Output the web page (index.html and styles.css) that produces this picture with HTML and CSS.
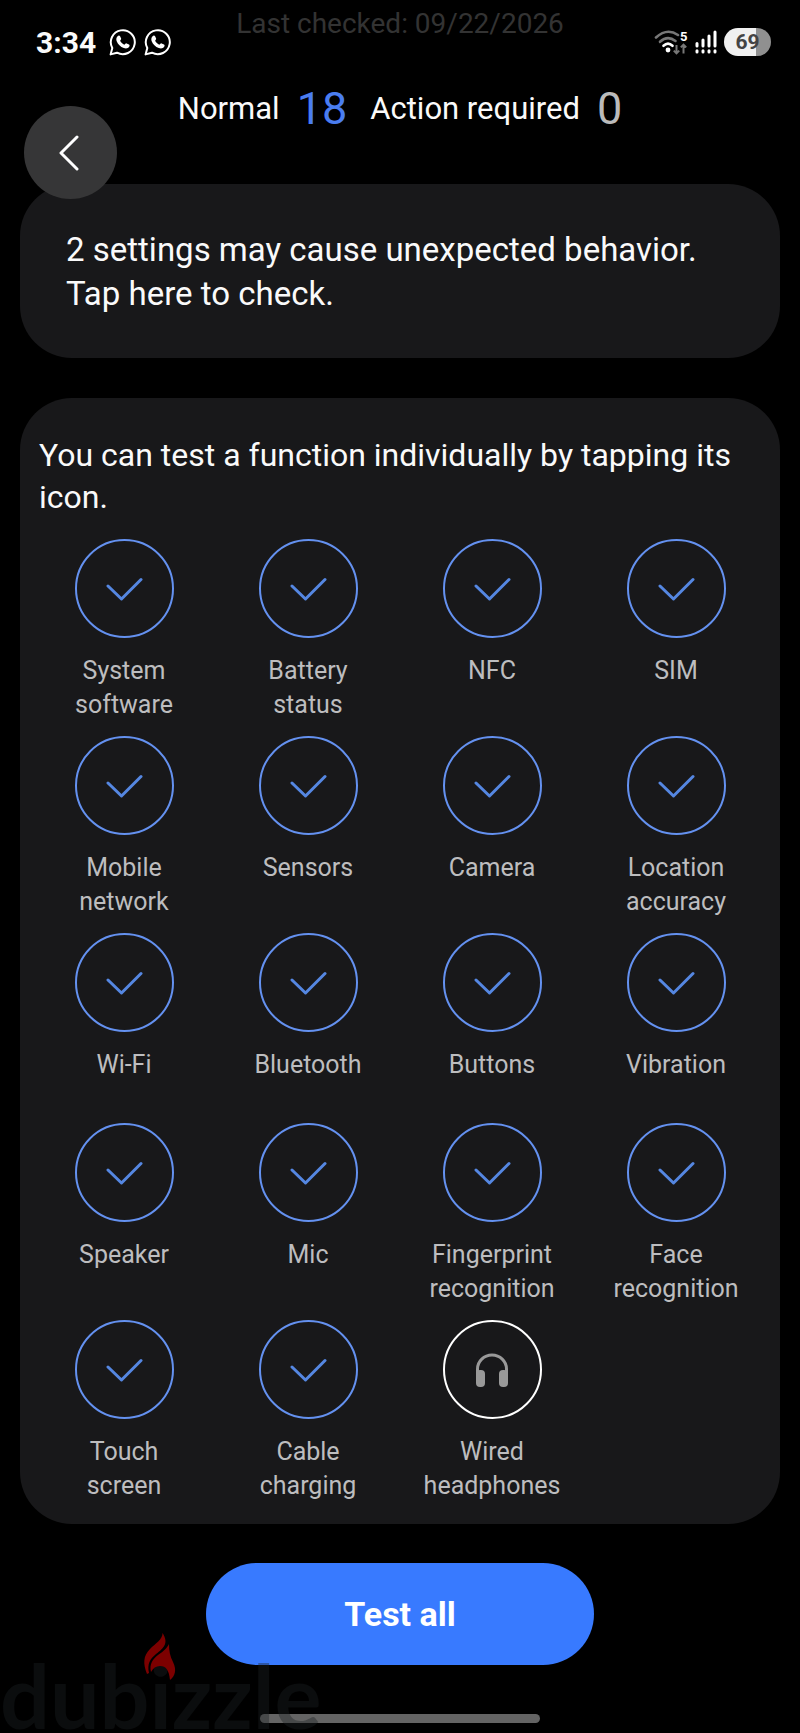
FILE: index.html
```html
<!DOCTYPE html>
<html lang="en">
<head>
  <meta charset="UTF-8" />
  <meta name="viewport" content="width=device-width, initial-scale=1.0"/>
  <title>Phone diagnostics</title>
  <link rel="stylesheet" href="styles.css">
</head>
<body>

  <!-- shared icons -->
  <svg class="sprite" aria-hidden="true">
    <symbol id="chat" viewBox="0 0 28 28">
      <path d="M1.6 26.4 L3.3 20 A12 12 0 1 1 8 24.7 Z" fill="none" stroke="#fff" stroke-width="2" stroke-linejoin="round"/>
      <path d="M8.6 8.2 C9.4 7.2 10.6 7.2 11.1 8.2 L12.1 10.6 C12.4 11.4 11.6 12 11.1 12.8 C12 14.6 13.5 15.9 15.4 16.8 C16.2 16 16.8 15 17.6 15.4 L20 16.6 C20.8 17 20.7 18 20.2 18.8 C19 20.6 16.8 20.8 14.8 20 C11.4 18.7 8.9 16.3 7.7 13.2 C7 11.4 7.3 9.6 8.6 8.2 Z" fill="#fff"/>
    </symbol>
    <symbol id="check" viewBox="0 0 38 26">
      <path d="M3 10 L16.5 23 L36 3.5" fill="none" stroke="#5587e2" stroke-width="3" stroke-linecap="round" stroke-linejoin="round"/>
    </symbol>
  </svg>

  <div class="status-bar">
    <div class="status-left">
      <span class="time">3:34</span>
      <svg class="chat-icon"><use href="#chat"/></svg>
      <svg class="chat-icon"><use href="#chat"/></svg>
    </div>
    <div class="status-right">
      <svg class="wifi-icon" viewBox="0 0 34 26">
        <g fill="none" stroke-width="2.6" stroke-linecap="round">
          <path d="M2 8.5 Q13 -1.5 24 6" stroke="#777"/>
          <path d="M6 12.8 Q13.5 6 21.5 12" stroke="#777"/>
          <path d="M9.5 16.8 Q14 12.6 18.5 16.8" stroke="#fff"/>
        </g>
        <circle cx="14" cy="21" r="2.4" fill="#fff"/>
        <path d="M22.5 16 V24 M19.8 21.6 L22.5 24.4 L25.2 21.6 M29.5 24.4 V16 M26.8 18.4 L29.5 15.6 L32.2 18.4" fill="none" stroke="#777" stroke-width="2"/>
        <text x="26" y="12" font-size="13" font-weight="700" fill="#fff">5</text>
      </svg>
      <svg class="signal-icon" viewBox="0 0 22 24">
        <g stroke="#fff" stroke-width="3" stroke-linecap="round">
          <path d="M2 13.5 V16 M8 10 V16 M14 6 V16 M20 2 V16"/>
          <path d="M2 20.8 V22 M8 20.8 V22 M14 20.8 V22 M20 20.8 V22"/>
        </g>
      </svg>
      <span class="battery">69</span>
    </div>
  </div>

  <button class="back" aria-label="Back">
    <svg viewBox="0 0 20 36"><path d="M18 2 L2 18 L18 34" fill="none" stroke="#fff" stroke-width="3" stroke-linecap="round" stroke-linejoin="round"/></svg>
  </button>

  <main>
    <p class="last-checked">Last checked: 09/22/2026</p>

    <div class="summary">
      <span>Normal</span>
      <span class="count normal">18</span>
      <span>Action required</span>
      <span class="count">0</span>
    </div>

    <button class="card notice">2 settings may cause unexpected behavior. Tap here to check.</button>

    <section class="card tests">
      <p>You can test a function individually by tapping its icon.</p>
      <div class="test-list" id="testList"></div>
    </section>

    <button class="test-all">Test all</button>
    <div class="home-bar"></div>
  </main>

  <svg class="watermark" viewBox="0 0 330 100">
    <text x="0" y="96">dubizzle</text>
    <g fill="#7c0000" transform="translate(144 0)">
      <path d="M18.5 0 C19 6 11 11 6 16 C-1 23 -1 31 3 41 L5 40 C3 31 6 26 12 21 C20 15 25 10 18.5 0 Z"/>
      <path d="M25 11 C25 18 26 23 29 29 C33 37 31 43 26 47 C25 37 22 33 16 33 C12 33 9 35 7 39 C5 31 9 26 14 22 C20 18 23 15 25 11 Z"/>
    </g>
  </svg>

  <script>
    const tests = [
      "System software", "Battery status", "NFC", "SIM",
      "Mobile network", "Sensors", "Camera", "Location accuracy",
      "Wi-Fi", "Bluetooth", "Buttons", "Vibration",
      "Speaker", "Mic", "Fingerprint recognition", "Face recognition",
      "Touch screen", "Cable charging", "Wired headphones"
    ];

    const checkIcon = `<svg class="check-icon"><use href="#check"/></svg>`;
    const headphonesIcon = `
      <svg class="headphones-icon" viewBox="0 0 34 34">
        <path d="M2.5 24 V16 A14.5 14 0 0 1 31.5 16 V24" fill="none" stroke="#999" stroke-width="3"/>
        <rect x="1" y="17" width="9" height="17" rx="4" fill="#999"/>
        <rect x="24" y="17" width="9" height="17" rx="4" fill="#999"/>
      </svg>`;

    const list = document.getElementById("testList");

    tests.forEach(name => {
      const pending = name === "Wired headphones";
      const item = document.createElement("button");
      item.className = pending ? "test pending" : "test";
      item.innerHTML = `
        <span class="circle">${pending ? headphonesIcon : checkIcon}</span>
        <span class="label">${name}</span>
      `;
      list.appendChild(item);
    });
  </script>
</body>
</html>
```
FILE: styles.css
```css
* {
  box-sizing: border-box;
}

body {
  position: relative;
  margin: 0;
  background-color: #000;
  color: #fafafa;
  font-family: Roboto, sans-serif;
}

button {
  border: none;
  padding: 0;
  background: none;
  color: inherit;
  font-family: inherit;
  cursor: pointer;
}

p {
  margin: 0;
}

.sprite {
  position: absolute;
  width: 0;
  height: 0;
}

/* status bar floats over the scrolled page */
.status-bar {
  position: absolute;
  top: 28px;
  left: 0;
  right: 0;
  height: 28px;
  padding: 0 29px 0 36px;
  display: flex;
  justify-content: space-between;
  align-items: center;
}

.status-left,
.status-right {
  display: flex;
  align-items: center;
  gap: 7px;
}

.time {
  margin-right: 6px;
  font-size: 30px;
  font-weight: 700;
}

.chat-icon {
  width: 28px;
  height: 28px;
}

.wifi-icon {
  width: 34px;
  height: 26px;
}

.signal-icon {
  width: 22px;
  height: 24px;
}

.battery {
  width: 47px;
  height: 28px;
  border-radius: 14px;
  background: linear-gradient(to right, #f0f0f0 68%, #909090 68%);
  color: #444;
  font-size: 21px;
  font-weight: 700;
  line-height: 28px;
  text-align: center;
}

.back {
  position: absolute;
  top: 106px;
  left: 24px;
  width: 93px;
  height: 93px;
  padding-right: 4px;
  border-radius: 50%;
  background-color: #363637;
}

.back svg {
  display: block;
  width: 20px;
  height: 36px;
  margin: 0 auto;
}

main {
  padding: 8px 20px 10px;
}

.last-checked {
  color: #333;
  font-size: 28px;
  line-height: 32px;
  text-align: center;
}

.summary {
  height: 56px;
  margin: 40px 0 48px;
  display: flex;
  justify-content: center;
  align-items: center;
  gap: 17px;
  font-size: 31px;
}

.count {
  color: #bbb;
  font-size: 45px;
}

.count.normal {
  margin-right: 6px;
  color: #4a7df0;
}

.card {
  display: block;
  width: 100%;
  border-radius: 52px;
  background-color: #18181a;
}

.notice {
  padding: 44px 46px 42px;
  font-size: 33px;
  line-height: 44px;
  text-align: left;
}

.tests {
  margin-top: 40px;
  padding: 36px 12px 21px;
}

.tests p {
  padding: 0 7px;
  font-size: 32px;
  line-height: 42px;
}

.test-list {
  margin-top: 21px;
  display: grid;
  grid-template-columns: repeat(4, 1fr);
  row-gap: 14px;
}

.test {
  min-height: 176px;
  display: flex;
  flex-direction: column;
  align-items: center;
  gap: 16px;
  color: #bdbdbf;
  font-size: 25px;
  line-height: 34px;
}

.circle {
  width: 99px;
  height: 99px;
  border: 2px solid #6491f0;
  border-radius: 50%;
  display: flex;
  justify-content: center;
  align-items: center;
}

.pending .circle {
  border-color: #fff;
}

.check-icon {
  width: 38px;
  height: 26px;
}

.headphones-icon {
  width: 34px;
  height: 34px;
}

.label {
  max-width: 144px;
}

.test-all {
  display: block;
  width: 51%;
  height: 102px;
  margin: 39px auto 0;
  border-radius: 51px;
  background-color: #387aff;
  color: #fff;
  font-size: 34px;
  font-weight: 700;
}

.home-bar {
  width: 280px;
  height: 9px;
  margin: 49px auto 0;
  border-radius: 5px;
  background-color: #646464;
}

/* site watermark over the bottom corner */
.watermark {
  position: absolute;
  left: 0;
  bottom: 0;
  width: 330px;
  height: 100px;
  pointer-events: none;
}

.watermark text {
  fill: rgba(28, 32, 34, 0.4);
  font-family: Lato, sans-serif;
  font-size: 88px;
  font-weight: 700;
}
```
